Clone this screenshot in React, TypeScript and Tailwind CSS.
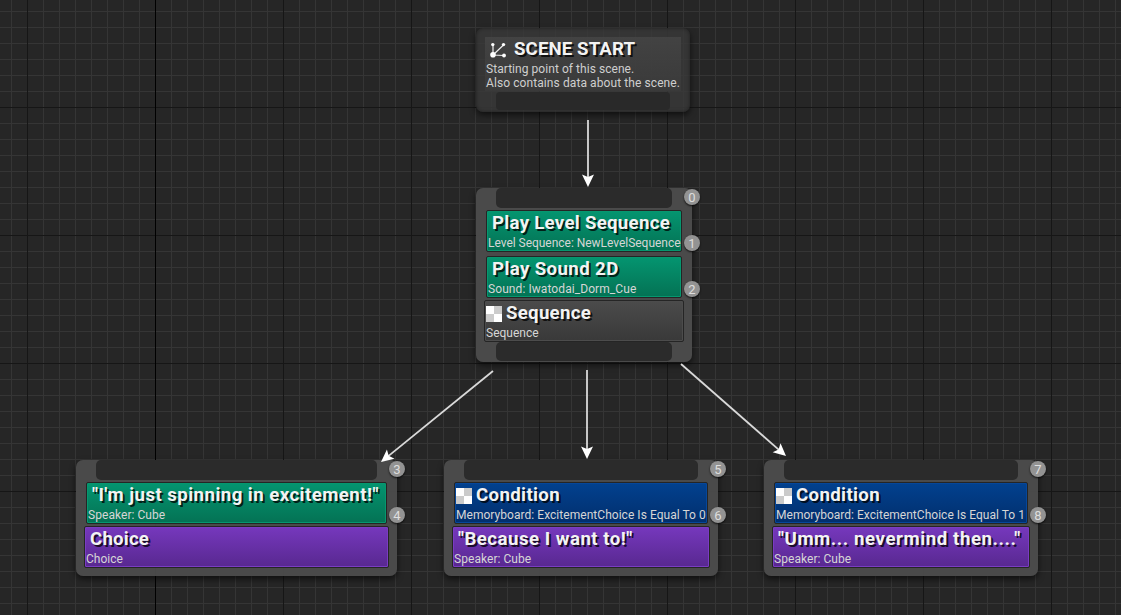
import React from "react";
import clsx from "clsx";

type Tone = "green" | "gray" | "purple" | "blue";

const TONES: Record<Tone, string> = {
  green: "from-[#049570] to-[#047254] shadow-[inset_0_0_0_1px_#06976f]",
  gray: "from-[#4b4b4b] to-[#393939] shadow-[inset_0_0_0_1px_#4c4c4c]",
  purple: "from-[#7638bd] to-[#582890] shadow-[inset_0_0_0_1px_#7a3cc2]",
  blue: "from-[#02418f] to-[#022f6d] shadow-[inset_0_0_0_1px_#06479a]",
};

function range(start: number, end: number, step: number) {
  const out: number[] = [];
  for (let v = start; v < end; v += step) out.push(v);
  return out;
}

function Grid() {
  return (
    <svg className="absolute inset-0" width="1121" height="615" shapeRendering="crispEdges">
      {range(11, 1121, 16).map((x) => (
        <rect key={x} x={x} y="0" width="1" height="615" fill="#353535" />
      ))}
      {range(11, 615, 16).map((y) => (
        <rect key={y} x="0" y={y} width="1121" height="1" fill="#353535" />
      ))}
      {range(27, 1121, 128).map((x) => (
        <rect key={x} x={x} y="0" width="1" height="615" fill="#161616" />
      ))}
      {range(107, 615, 128).map((y) => (
        <rect key={y} x="0" y={y} width="1121" height="1" fill="#161616" />
      ))}
      <rect x="155" y="0" width="1" height="615" fill="#000" />
    </svg>
  );
}

function Checker() {
  return (
    <svg className="mt-px mr-1 shrink-0" width="16" height="16" shapeRendering="crispEdges">
      <rect width="16" height="16" fill="#fff" />
      <rect x="8" width="8" height="8" fill="#cbcbcb" />
      <rect y="8" width="8" height="8" fill="#cbcbcb" />
    </svg>
  );
}

function Title({ children, className }: { children: React.ReactNode; className?: string }) {
  return (
    <span
      className={clsx(
        "whitespace-nowrap text-[18.67px] leading-[22px] font-bold text-[#f3f3f3] [text-shadow:2px_2px_0_rgba(0,0,0,0.75)]",
        className,
      )}
    >
      {children}
    </span>
  );
}

interface BlockProps {
  tone: Tone;
  title: string;
  text: string;
  titleClass?: string;
  textClass?: string;
  icon?: boolean;
  wide?: boolean;
  badge?: number;
}

function Block({ tone, title, text, titleClass, textClass, icon, wide, badge }: BlockProps) {
  return (
    <div
      className={clsx(
        "relative h-[42px] rounded-[2px] border border-[#252525] bg-linear-to-b",
        wide ? "mx-2" : "mx-2.5",
        TONES[tone],
      )}
    >
      <div className={clsx("flex h-6 items-center", icon ? "pl-px" : "pl-[5px]")}>
        {icon && <Checker />}
        <Title className={titleClass}>{title}</Title>
      </div>
      <div className={clsx("-mt-0.5 pl-px text-[12px] leading-[20px] whitespace-nowrap text-[#d6d6d6]", textClass)}>
        {text}
      </div>
      {badge !== undefined && <Badge value={badge} className="-right-[19px] top-[24px]" />}
    </div>
  );
}

function Badge({ value, className }: { value: number; className: string }) {
  return (
    <span
      className={clsx(
        "absolute flex size-4 items-center justify-center rounded-full bg-[#939393] pt-px text-[13px] leading-none text-[#dedede] shadow-[0_1px_2px_rgba(0,0,0,0.8)]",
        className,
      )}
    >
      {value}
    </span>
  );
}

function Node({ className, badge, children }: { className: string; badge: number; children: React.ReactNode }) {
  return (
    <section
      className={clsx(
        "absolute flex flex-col rounded-[7px] bg-[#4c4c4c]/95 shadow-[0_3px_6px_rgba(0,0,0,0.6)]",
        className,
      )}
    >
      <div className="mx-5 mb-0.5 h-5 rounded-[5px] bg-[#2b2b2b]" />
      {children}
      <Badge value={badge} className="-right-2 top-[1px]" />
    </section>
  );
}

function Arrow({ x1, y1, x2, y2 }: { x1: number; y1: number; x2: number; y2: number }) {
  const angle = (Math.atan2(y2 - y1, x2 - x1) * 180) / Math.PI;
  const length = Math.hypot(x2 - x1, y2 - y1);
  return (
    <g transform={`translate(${x1} ${y1}) rotate(${angle})`}>
      <path d={`M0 0H${length - 9}`} stroke="#d9d9d9" strokeWidth="1.8" />
      <path d={`M${length} 0l-12.5 -6l2.6 6l-2.6 6z`} fill="#fff" />
    </g>
  );
}

function SceneIcon() {
  return (
    <svg className="mt-px mr-2 shrink-0" width="16" height="16" viewBox="0 0 16 16" fill="none">
      <path d="M3 13L3 3M3 13L13.5 3M3 13L14 13.5" stroke="#eee" strokeWidth="1.2" />
      <circle cx="3" cy="12.8" r="2.8" fill="#fff" />
      <circle cx="2.8" cy="2.6" r="1.7" fill="#fff" />
      <circle cx="13.5" cy="2.6" r="1.7" fill="#fff" />
      <circle cx="14" cy="13.5" r="1.9" fill="#fff" />
    </svg>
  );
}

export default function App() {
  return (
    <main className="relative h-[615px] w-[1121px] overflow-hidden bg-[#262626] font-[Roboto,sans-serif]">
      <Grid />

      <section className="absolute top-7 left-[476px] flex h-[84px] w-[214px] flex-col rounded-[7px] bg-[#383838]/85 px-[9px] pt-[9px] shadow-[0_3px_6px_rgba(0,0,0,0.6),inset_0_0_3px_1px_rgba(0,0,0,0.25)]">
        <div className="h-[54px] bg-linear-to-b from-[#464646]/80 to-[#3b3b3b]/80 pl-px">
          <div className="mb-px flex h-6 items-center pl-1">
            <SceneIcon />
            <Title className="tracking-[0.1px]">SCENE START</Title>
          </div>
          <p className="text-[12px] leading-[14px] tracking-[0.09px] whitespace-nowrap text-[#cfcfcf]">
            <span className="tracking-[0.05px]">Starting point of this scene.</span>
            <br />
            Also contains data about the scene.
          </p>
        </div>
        <div className="mx-[11px] mt-px h-[18px] rounded-[4px] bg-[#292929]" />
      </section>

      <Node className="top-[188px] left-[476px] h-[174px] w-[216px]" badge={0}>
        <Block
          tone="green"
          title="Play Level Sequence"
          titleClass="tracking-[0.28px]"
          text="Level Sequence: NewLevelSequence"
          textClass="tracking-[-0.03px]"
          badge={1}
        />
        <div className="h-1" />
        <Block
          tone="green"
          title="Play Sound 2D"
          titleClass="tracking-[0.38px]"
          text="Sound: Iwatodai_Dorm_Cue"
          textClass="tracking-[0.08px]"
          badge={2}
        />
        <div className="h-0.5" />
        <Block tone="gray" title="Sequence" titleClass="tracking-[0.27px]" text="Sequence" icon wide />
        <div className="mx-5 h-[19px] rounded-[5px] bg-[#2b2b2b]" />
      </Node>

      <Node className="top-[460px] left-[76px] h-[116px] w-[321px]" badge={3}>
        <Block
          tone="green"
          title={'"I\'m just spinning in excitement!"'}
          titleClass="tracking-[0.44px]"
          text="Speaker: Cube"
          textClass="tracking-[0.05px]"
          badge={4}
        />
        <div className="h-0.5" />
        <Block tone="purple" title="Choice" titleClass="tracking-[0.2px]" text="Choice" wide />
      </Node>

      <Node className="top-[460px] left-[444px] h-[116px] w-[274px]" badge={5}>
        <Block
          tone="blue"
          title="Condition"
          titleClass="tracking-[0.35px]"
          text="Memoryboard: ExcitementChoice Is Equal To 0"
          textClass="tracking-[0.04px]"
          icon
          badge={6}
        />
        <div className="h-0.5" />
        <Block
          tone="purple"
          title={'"Because I want to!"'}
          titleClass="tracking-[0.48px]"
          text="Speaker: Cube"
          textClass="tracking-[0.05px]"
          wide
        />
      </Node>

      <Node className="top-[460px] left-[764px] h-[116px] w-[274px]" badge={7}>
        <Block
          tone="blue"
          title="Condition"
          titleClass="tracking-[0.35px]"
          text="Memoryboard: ExcitementChoice Is Equal To 1"
          textClass="tracking-[0.02px]"
          icon
          badge={8}
        />
        <div className="h-0.5" />
        <Block
          tone="purple"
          title={'"Umm... nevermind then...."'}
          titleClass="tracking-[0.57px]"
          text="Speaker: Cube"
          textClass="tracking-[0.05px]"
          wide
        />
      </Node>

      <svg className="pointer-events-none absolute inset-0" width="1121" height="615">
        <Arrow x1={588} y1={120} x2={588} y2={187} />
        <Arrow x1={493} y1={371} x2={381} y2={462} />
        <Arrow x1={587} y1={370} x2={587} y2={459} />
        <Arrow x1={681} y1={364} x2={786} y2={456} />
      </svg>
    </main>
  );
}
